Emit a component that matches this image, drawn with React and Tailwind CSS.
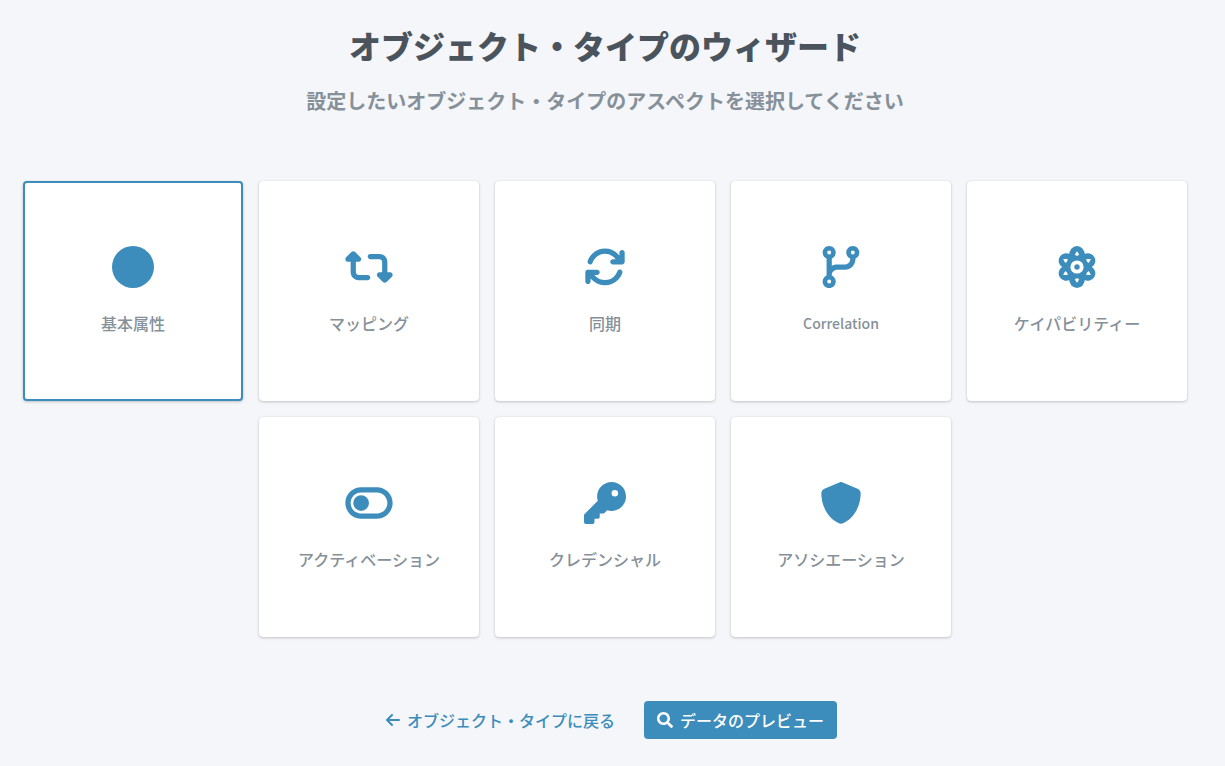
import React, { useState } from "react";
import { FaSearch } from "react-icons/fa";
import {
  FaArrowLeft,
  FaArrowsRotate,
  FaCircle,
  FaCodeBranch,
  FaKey,
  FaRetweet,
  FaShield,
  FaToggleOff,
} from "react-icons/fa6";

// Three heavy orbits around a nucleus
const AtomIcon = ({ className }) => (
  <svg viewBox="0 0 42 42" className={className} aria-hidden="true">
    <g fill="currentColor">
      <rect x="13" y="0" width="16" height="42" rx="8" ry="9.5" />
      <rect x="13.5" y="1" width="15" height="40" rx="7.5" transform="rotate(60 21 21)" />
      <rect x="13.5" y="1" width="15" height="40" rx="7.5" transform="rotate(120 21 21)" />
    </g>
    <g fill="white" stroke="white" strokeWidth="1" strokeLinejoin="round">
      {[0, 60, 120, 180, 240, 300].map((angle) => (
        <path
          key={angle}
          d="M21 5.8 L19.3 8.7 Q21 9.7 22.7 8.7 Z"
          transform={`rotate(${angle} 21 21)`}
        />
      ))}
    </g>
    <circle cx="21" cy="21" r="6.6" fill="white" />
    <circle cx="21" cy="21" r="2.7" fill="currentColor" />
  </svg>
);

const tiles = [
  { id: "basic", label: "基本属性", Icon: FaCircle },
  { id: "mappings", label: "マッピング", Icon: FaRetweet },
  { id: "synchronization", label: "同期", Icon: FaArrowsRotate },
  { id: "correlation", label: "Correlation", Icon: FaCodeBranch, latin: true },
  { id: "capabilities", label: "ケイパビリティー", Icon: AtomIcon },
  { id: "activation", label: "アクティベーション", Icon: FaToggleOff },
  { id: "credentials", label: "クレデンシャル", Icon: FaKey },
  { id: "associations", label: "アソシエーション", Icon: FaShield },
];

const Tile = ({ label, Icon, latin, selected, onClick }) => (
  <button
    type="button"
    aria-pressed={selected}
    onClick={onClick}
    className={`flex size-[220px] cursor-pointer flex-col items-center justify-center gap-[23px] rounded-sm bg-white pb-px shadow-[0_0_1px_rgba(0,0,0,0.13),0_1px_3px_rgba(0,0,0,0.2)] ${
      selected ? "border-2 border-[#3c8dbc]" : ""
    }`}
  >
    <Icon className="h-[42px] w-12 text-[#3c8dbc]" />
    <span
      className={`font-medium text-[#869099] ${
        latin ? "text-sm/6" : "text-base/6"
      }`}
    >
      {label}
    </span>
  </button>
);

const App = () => {
  const [selected, setSelected] = useState("basic");

  return (
    <main className="flex min-h-screen flex-col items-center bg-[#f4f6f9] pt-[25px] pr-[15px] pb-6 font-['Noto_Sans_CJK_JP',sans-serif]">
      <h1 className="text-center text-[32px] leading-10 font-black text-[#4b545c]">
        オブジェクト・タイプのウィザード
      </h1>
      <p className="mt-5 text-center text-xl leading-8 font-bold text-[#869099]">
        設定したいオブジェクト・タイプのアスペクトを選択してください
      </p>

      <div className="mt-16 flex w-full max-w-[1200px] flex-wrap justify-center gap-4">
        {tiles.map(({ id, label, Icon, latin }) => (
          <Tile
            key={id}
            label={label}
            Icon={Icon}
            latin={latin}
            selected={selected === id}
            onClick={() => setSelected(id)}
          />
        ))}
      </div>

      <div className="mt-16 flex flex-wrap justify-center gap-4 text-base leading-6 font-medium">
        <a
          href="#object-types"
          className="flex h-[38px] items-center gap-[7px] px-[13px] text-[#3c8dbc]"
        >
          <FaArrowLeft className="h-4 w-3.5" />
          オブジェクト・タイプに戻る
        </a>
        <button
          type="button"
          className="flex h-[38px] cursor-pointer items-center gap-[7px] rounded-sm bg-[#3c8dbc] px-[13px] text-white"
        >
          <FaSearch className="size-4" />
          データのプレビュー
        </button>
      </div>
    </main>
  );
};

export default App;
